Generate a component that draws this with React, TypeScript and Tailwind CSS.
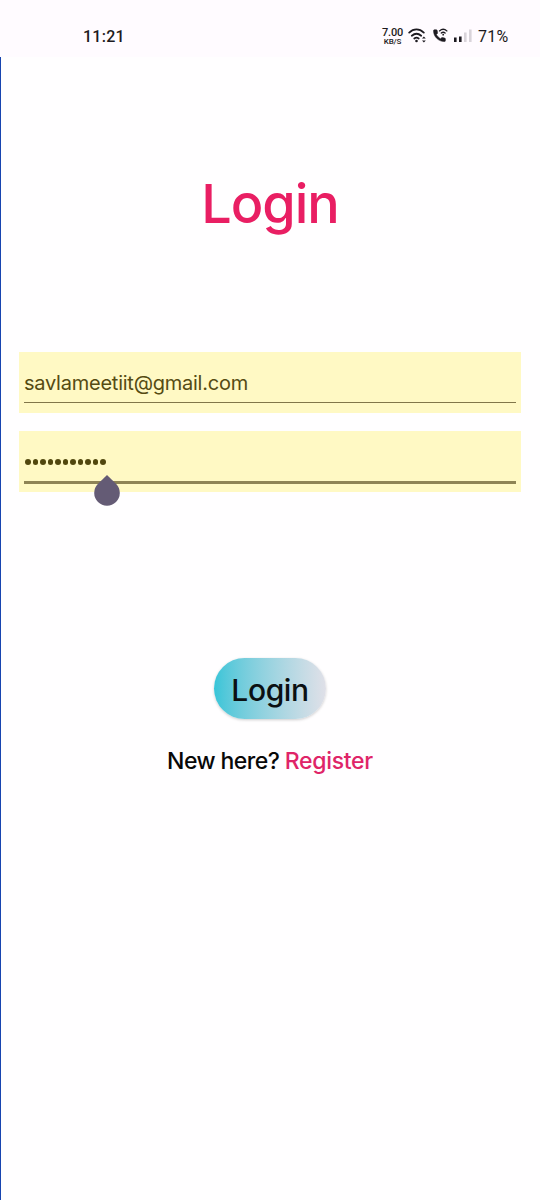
import React from "react";

function WifiIcon() {
  return (
    <svg width="20" height="16" viewBox="0 0 20 16" fill="none" stroke="#1d1a20" strokeWidth="1.800" strokeLinecap="round">
      <path d="M1.200 4.600C5.600.4 11.400.4 15.800 4.600" />
      <path d="M3.800 7.700C7 5 10 5 13.200 7.700" />
      <path d="M6.300 10.500C7.800 9.400 9.200 9.400 10.700 10.500" />
      <circle cx="8.500" cy="13" r="1.300" fill="#1d1a20" stroke="none" />
      <path d="M14 10.400L15.900 8.400L17.800 10.400ZM14 12.400L15.900 14.400L17.800 12.400Z" fill="#1d1a20" stroke="none" />
    </svg>
  );
}

function WifiCallIcon() {
  return (
    <svg width="15" height="15" viewBox="0 0 15 15" fill="none">
      <path d="M.5 2.800C.5 2 1 1.700 1.700 1.700H3.200C3.800 1.700 4.100 2 4.200 2.600L4.600 4.700C4.700 5.200 4.500 5.500 4.200 5.800L3.400 6.600C4.300 8.300 5.700 9.700 7.400 10.700L8.400 9.900C8.700 9.600 9.200 9.500 9.700 9.600L11.500 10C12.100 10.100 12.400 10.400 12.400 11V12.400C12.400 13.200 12 13.600 11.200 13.600C5.400 13.400.6 8.700.5 2.800Z" fill="#1d1a20" stroke="#1d1a20" strokeWidth=".5" />
      <path d="M6.500 2.900C8.800.9 11.600.9 13.900 2.900M8.300 5C9.500 4 10.900 4 12.100 5" stroke="#1d1a20" strokeWidth="1.300" strokeLinecap="round" />
      <circle cx="10.200" cy="6.700" r=".9" fill="#1d1a20" />
    </svg>
  );
}

function SignalIcon() {
  return (
    <svg width="19" height="14" viewBox="0 0 19 14">
      <path d="M0 8.500H2.600V13H0ZM5 7.500H7.600V13H5Z" fill="#1d1a20" />
      <path d="M10 3.500H12.600V13H10ZM15 0.500H17.600V13H15Z" fill="#d9d4da" />
    </svg>
  );
}

function StatusBar() {
  return (
    <header className="flex h-[57px] items-start bg-[#fffbff] pl-[83px] pt-[27px] font-['Roboto',sans-serif] font-medium text-[#1d1a20]">
      <span className="w-[299px] text-base leading-5 tracking-[0.25px]">11:21</span>
      <div className="flex w-[21px] flex-col items-center whitespace-nowrap pt-px">
        <span className="text-[11px] leading-[10px] tracking-[-0.2px]">7.00</span>
        <span className="text-[8px] leading-[8px] tracking-[-0.2px]">KB/S</span>
      </div>
      <div className="ml-[5px] pt-[1px]"><WifiIcon /></div>
      <div className="ml-[5px] pt-[1px]"><WifiCallIcon /></div>
      <div className="ml-[6px] pt-[2px]"><SignalIcon /></div>
      <span className="ml-[5px] text-base font-normal leading-5 tracking-[0.3px]">71%</span>
    </header>
  );
}

export default function App() {
  return (
    <div className="flex h-[1200px] w-[540px] flex-col overflow-hidden bg-[#fffeff] font-['Inter',sans-serif]">
      <StatusBar />
      <main className="flex flex-1 flex-col items-center border-l border-[#1744b0] pr-px">
        <h1 className="mt-[112px] h-[70px] whitespace-nowrap text-[54px] font-medium leading-[70px] tracking-[-1px] text-[#e91e63]">Login</h1>

        <div className="mt-[113px] h-[61px] w-[502px] bg-[#fff9c4] px-[5px] pt-[17px]">
          <div className="h-[34px] whitespace-nowrap border-b border-[#817649] text-[20px] leading-[28px] tracking-[-0.24px] text-[#554b13]">savlameetiit@gmail.com</div>
        </div>

        <div className="relative mt-[18px] h-[61px] w-[502px] bg-[#fff9c4] px-[5px] pt-[17px]">
          <div className="flex h-[36px] gap-[2px] border-b-[3px] border-[#8e8455] pl-[1px] pt-[11px]">
            {Array.from({ length: 11 }, (_, i) => (
              <span key={i} className="h-[6px] w-[5.500px] shrink-0 rounded-full bg-[#51470e]" />
            ))}
          </div>
          <svg className="absolute left-[75px] top-[44px]" width="26" height="31" viewBox="0 0 26 31">
            <path d="M13 0L22.200 9A12.800 12.800 0 1 1 3.800 9Z" fill="#645b75" />
          </svg>
        </div>

        <button className="mt-[166px] flex h-[61px] w-[112px] items-center justify-center rounded-full bg-linear-to-r from-[#36c5d8] to-[#e0e0e8] pt-[3px] text-[30px] font-medium tracking-[-0.4px] text-[#0b1012] shadow-[0_1px_3px_rgba(0,0,0,0.2)]">Login</button>

        <p className="mt-[27px] whitespace-nowrap text-[23px] font-medium leading-[30px] tracking-[-0.56px] text-[#080808]">
          New here? <a className="tracking-[-0.3px] text-[#df2468]">Register</a>
        </p>
      </main>
    </div>
  );
}
